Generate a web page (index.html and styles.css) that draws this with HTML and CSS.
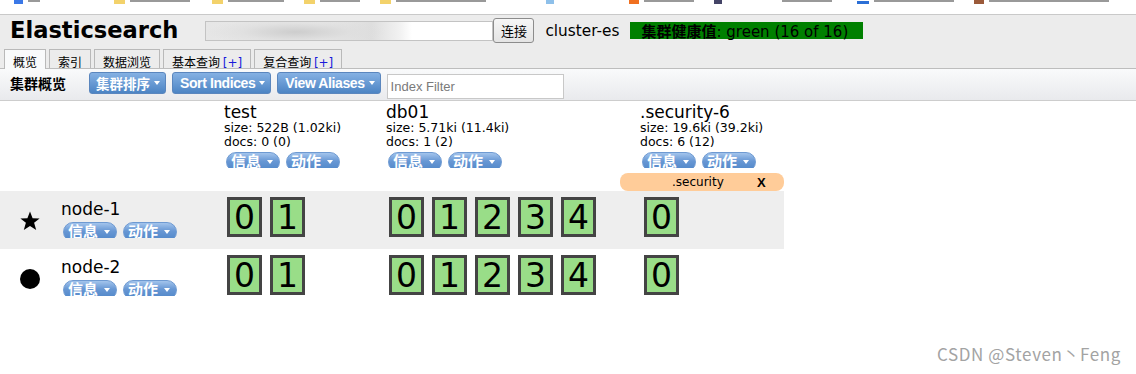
FILE: index.html
```html
<!DOCTYPE html>
<html lang="zh-CN">
<head>
<meta charset="utf-8">
<title>Elasticsearch</title>
<link rel="stylesheet" href="styles.css">
</head>
<body>
<div class="bookmarks">
  <span class="bm bm-blue"></span><span class="bm-text t1"></span>
  <span class="bm bm-folder f1"></span><span class="bm-text t2"></span>
  <span class="bm bm-folder f2"></span><span class="bm-text t3"></span>
  <span class="bm bm-folder f3"></span><span class="bm-text t4"></span>
  <span class="bm bm-folder f4"></span><span class="bm-text t5"></span>
  <span class="bm bm-sky"></span>
  <span class="bm bm-orange"></span><span class="bm-text t6"></span>
  <span class="bm bm-dark"></span>
  <span class="bm-text t7"></span>
  <span class="bm bm-blue2"></span><span class="bm-text t8"></span>
  <span class="bm bm-brown"></span><span class="bm-text t9"></span>
</div>

<header class="header">
  <div class="header-row">
    <h1 class="brand">Elasticsearch</h1>
    <input class="url" type="text" value="" aria-label="url">
    <button class="connect">连接</button>
    <span class="cluster-name">cluster-es</span>
    <span class="health"><b>集群健康值</b>: green (16 of 16)</span>
  </div>
  <nav class="tabs">
    <span class="tab active">概览</span>
    <span class="tab">索引</span>
    <span class="tab">数据浏览</span>
    <span class="tab">基本查询 <span class="plus">[+]</span></span>
    <span class="tab">复合查询 <span class="plus">[+]</span></span>
  </nav>
</header>

<div class="toolbar">
  <span class="toolbar-title">集群概览</span>
  <button class="btn btn-cjk">集群排序<i class="caret"></i></button>
  <button class="btn">Sort Indices<i class="caret"></i></button>
  <button class="btn">View Aliases<i class="caret"></i></button>
  <input class="filter" type="text" placeholder="Index Filter">
</div>

<main class="cluster">
  <div class="row head-row">
    <div class="cell"></div>
    <div class="cell index">
      <div class="index-name">test</div>
      <div class="meta">size: 522B (1.02ki)</div>
      <div class="meta">docs: 0 (0)</div>
      <div class="pills"><span class="pill">信息<i class="caret"></i></span><span class="pill">动作<i class="caret"></i></span></div>
    </div>
    <div class="cell index">
      <div class="index-name">db01</div>
      <div class="meta">size: 5.71ki (11.4ki)</div>
      <div class="meta">docs: 1 (2)</div>
      <div class="pills"><span class="pill">信息<i class="caret"></i></span><span class="pill">动作<i class="caret"></i></span></div>
    </div>
    <div class="cell index index-last">
      <div class="index-name">.security-6</div>
      <div class="meta">size: 19.6ki (39.2ki)</div>
      <div class="meta">docs: 6 (12)</div>
      <div class="pills"><span class="pill">信息<i class="caret"></i></span><span class="pill">动作<i class="caret"></i></span></div>
    </div>
  </div>

  <div class="row alias-row">
    <div></div><div></div><div></div>
    <div class="alias"><span class="alias-name">.security</span><b class="alias-x">X</b></div>
  </div>

  <div class="row node-row shaded">
    <div class="node">
      <svg class="node-icon" viewBox="0 0 20 20" width="20" height="20"><polygon points="10,0.5 12.6,7.2 19.6,7.4 14.1,11.8 16.2,19 10,14.9 3.8,19 5.9,11.8 0.4,7.4 7.4,7.2" fill="#000"/></svg>
      <div class="node-info">
        <div class="node-name">node-1</div>
        <div class="pills"><span class="pill">信息<i class="caret"></i></span><span class="pill">动作<i class="caret"></i></span></div>
      </div>
    </div>
    <div class="shards"><span class="shard">0</span><span class="shard">1</span></div>
    <div class="shards"><span class="shard">0</span><span class="shard">1</span><span class="shard">2</span><span class="shard">3</span><span class="shard">4</span></div>
    <div class="shards shards-last"><span class="shard">0</span></div>
  </div>

  <div class="row node-row">
    <div class="node">
      <svg class="node-icon" viewBox="0 0 20 20" width="20" height="20"><circle cx="10" cy="10" r="10" fill="#000"/></svg>
      <div class="node-info">
        <div class="node-name">node-2</div>
        <div class="pills"><span class="pill">信息<i class="caret"></i></span><span class="pill">动作<i class="caret"></i></span></div>
      </div>
    </div>
    <div class="shards"><span class="shard">0</span><span class="shard">1</span></div>
    <div class="shards"><span class="shard">0</span><span class="shard">1</span><span class="shard">2</span><span class="shard">3</span><span class="shard">4</span></div>
    <div class="shards shards-last"><span class="shard">0</span></div>
  </div>
</main>

<div class="watermark">CSDN @Steven丶Feng</div>
</body>
</html>
```

FILE: styles.css
```css
* { box-sizing: border-box; }

html, body {
  margin: 0;
  padding: 0;
  background: #fff;
}

body {
  width: 1136px;
  height: 374px;
  overflow: hidden;
  position: relative;
  font-family: "DejaVu Sans", "Noto Sans CJK SC", sans-serif;
  color: #000;
}

/* ---------- browser bookmark remnants ---------- */
.bookmarks {
  height: 15px;
  border-bottom: 1px solid #c9c9c9;
  display: flex;
  align-items: flex-start;
  background: #fff;
}
.bm { display: block; height: 4px; width: 11px; }
.bm-blue { background: #3b78e7; margin-left: 14px; width: 9px; }
.bm-text { display: block; height: 2px; margin-top: 0; background: #999; margin-left: 5px; }
.t1 { width: 12px; }
.bm-folder { background: #f3d26b; }
.f1 { margin-left: 74px; }
.t2 { width: 60px; }
.f2 { margin-left: 22px; }
.t3 { width: 56px; }
.f3 { margin-left: 20px; }
.t4 { width: 40px; }
.f4 { margin-left: 20px; }
.t5 { width: 90px; }
.bm-sky { background: #8ec0ea; margin-left: 60px; width: 8px; }
.bm-orange { background: #f07020; margin-left: 75px; width: 10px; }
.t6 { width: 50px; }
.bm-dark { background: #446; margin-left: 20px; width: 8px; }
.t7 { width: 50px; margin-left: 60px; }
.bm-blue2 { background: #2b6fd6; margin-left: 25px; width: 12px; height: 3px; margin-top: 1px; }
.t8 { width: 80px; }
.bm-brown { background: #9b5a3a; margin-left: 20px; width: 10px; }
.t9 { width: 120px; }

/* ---------- header ---------- */
.header {
  background: #ececec;
  height: 53px;
  padding-top: 2px;
}
.header-row {
  display: flex;
  align-items: center;
  height: 27px;
}
.brand {
  margin: 0 0 0 10px;
  font-size: 22.6px;
  font-weight: bold;
  line-height: 27px;
}
.url {
  margin-left: 27px;
  width: 288px;
  height: 20px;
  border: 1px solid #c3c3c3;
  background:
    radial-gradient(ellipse 90px 14px at 90px 10px, rgba(200,200,200,.85), rgba(220,220,220,.6) 60%, rgba(255,255,255,0) 100%),
    linear-gradient(90deg, #e6e6e6 0, #e9e9e9 40%, #dedede 58%, #f2f2f2 68%, #fff 72%);
  padding: 0;
}
.connect {
  height: 25px;
  width: 41px;
  padding: 0;
  border: 1px solid #8c8c8c;
  border-radius: 3px;
  background: linear-gradient(#f6f6f6, #e4e4e4);
  font-family: "Noto Sans CJK SC", sans-serif;
  font-size: 13px;
  color: #000;
}
.cluster-name {
  margin-left: 11px;
  font-size: 15.3px;
  width: 74px;
  white-space: nowrap;
}
.health {
  margin-left: 11px;
  width: 233px;
  height: 17px;
  line-height: 17px;
  background: #008000;
  padding-left: 11px;
  font-size: 15px;
  white-space: nowrap;
}
.health b {
  font-family: "Noto Sans CJK SC", sans-serif;
  font-weight: bold;
}

/* ---------- tabs ---------- */
.tabs {
  display: flex;
  margin-top: 5px;
  padding-left: 4px;
  gap: 3px;
  height: 19px;
}
.tab {
  position: relative;
  height: 19px;
  padding: 5px 8px 0;
  line-height: 13px;
  font-size: 12px;
  font-family: "Noto Sans CJK SC", sans-serif;
  border: 1px solid #b9b9b9;
  border-bottom: none;
  background: #ececec;
  white-space: nowrap;
}
.tab.active {
  height: 20px;
  background: #f9fafb;
  z-index: 1;
}
.plus {
  color: #1a1adb;
  font-family: "DejaVu Sans", sans-serif;
  font-size: 12px;
}

/* ---------- toolbar ---------- */
.toolbar {
  display: flex;
  align-items: flex-start;
  height: 33px;
  border-top: 1px solid #bdbdbd;
  border-bottom: 1px solid #cdcdcd;
  background: linear-gradient(#f9fafb, #e9eaed);
  padding-left: 10px;
}
.toolbar-title {
  font-family: "Noto Sans CJK SC", sans-serif;
  font-weight: bold;
  font-size: 14px;
  line-height: 22px;
  margin-top: 3px;
  width: 79px;
}
.btn {
  display: flex;
  align-items: center;
  height: 22px;
  margin-top: 3px;
  margin-right: 6px;
  padding: 0 5px 0 7px;
  border: 1px solid #5a86be;
  border-radius: 3px;
  background: linear-gradient(#85b1e3, #4c84c4);
  color: #fff;
  font-family: "Liberation Sans", sans-serif;
  font-weight: bold;
  font-size: 14px;
  letter-spacing: -0.4px;
  white-space: nowrap;
}
.btn-cjk {
  font-family: "Noto Sans CJK SC", sans-serif;
  font-size: 13.5px;
  letter-spacing: 0;
  padding: 0 5px 0 6px;
}
.caret {
  display: inline-block;
  width: 0;
  height: 0;
  margin-left: 4px;
  border-top: 4px solid #fff;
  border-left: 3.5px solid transparent;
  border-right: 3.5px solid transparent;
}
.filter {
  margin-top: 5px;
  margin-left: 0;
  width: 177px;
  height: 25px;
  border: 1px solid #c8c8c8;
  padding: 0 3px;
  font-family: "Liberation Sans", sans-serif;
  font-size: 13px;
}
.filter::placeholder { color: #7a7a7a; }

/* ---------- cluster overview ---------- */
.cluster {
  width: 784px;
}
.row {
  display: grid;
  grid-template-columns: 224px 162px 234px 164px;
}
.head-row {
  padding-top: 2px;
  height: 72px;
}
.index-last { padding-left: 20px; }
.index-name {
  font-size: 17px;
  line-height: 18px;
  white-space: nowrap;
}
.meta {
  font-size: 12.5px;
  line-height: 14px;
  white-space: nowrap;
}
.pills {
  display: flex;
  gap: 6px;
  height: 16px;
  overflow: hidden;
  margin-top: 3px;
  padding-left: 2px;
}
.pill {
  display: flex;
  align-items: center;
  height: 20px;
  padding: 0 6px 2px 4px;
  border: 1px solid #6e9ad2;
  border-radius: 10px;
  background: linear-gradient(#a3c4ec, #6797d4 45%, #4f86c8);
  color: #fff;
  font-family: "Noto Sans CJK SC", sans-serif;
  font-weight: bold;
  font-size: 15px;
  line-height: 18px;
  white-space: nowrap;
}
.pill .caret { margin-left: 6px; margin-top: 2px; }

.alias-row { height: 18px; }
.alias {
  display: flex;
  align-items: center;
  height: 18px;
  background: #ffcc99;
  border-radius: 8px;
  font-size: 12px;
  padding-left: 52px;
}
.alias-name { width: 85px; }
.alias-x {
  font-family: "Liberation Sans", sans-serif;
  font-size: 13px;
}

.node-row { height: 58px; }
.node-row.shaded { background: #eeeeee; }
.node {
  display: flex;
  align-items: flex-start;
}
.node-icon {
  margin-left: 20px;
  margin-top: 20px;
  flex: none;
}
.node-info {
  margin-left: 21px;
  padding-top: 9px;
}
.node-name {
  font-size: 17px;
  line-height: 18px;
}
.node-info .pills { margin-top: 4px; }

.shards {
  display: flex;
  gap: 8px;
  padding-top: 6px;
  padding-left: 3px;
}
.shards-last { padding-left: 24px; }
.shard {
  width: 35px;
  height: 40px;
  border: 3px solid #444;
  background: #99dd88;
  text-align: center;
  font-size: 33px;
  line-height: 33px;
  padding-top: 1px;
}

/* ---------- watermark ---------- */
.watermark {
  position: absolute;
  left: 937px;
  top: 343px;
  font-family: "Noto Sans CJK SC", sans-serif;
  font-size: 17px;
  letter-spacing: 0.6px;
  line-height: 22px;
  color: #a3a3a3;
  white-space: nowrap;
}
```
